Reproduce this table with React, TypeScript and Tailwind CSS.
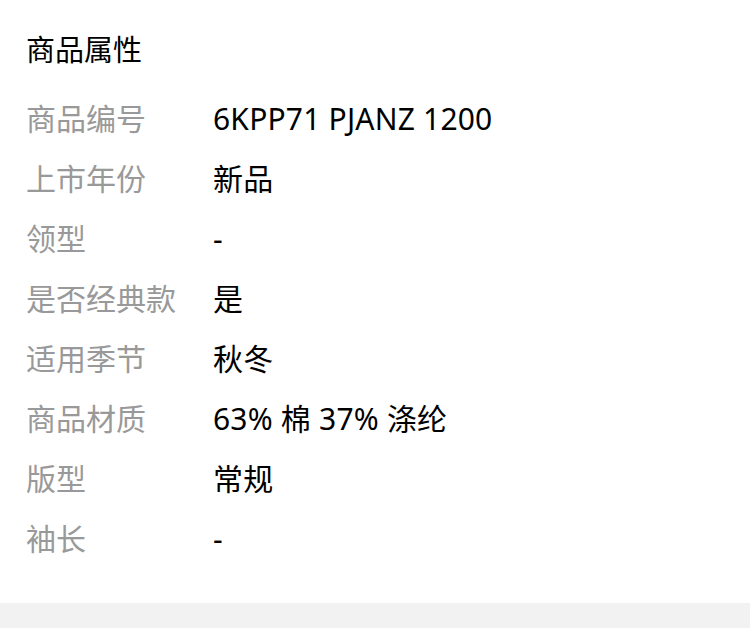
import React from "react";

const rows: [string, string][] = [
  ["商品编号", "6KPP71 PJANZ 1200"],
  ["上市年份", "新品"],
  ["领型", "-"],
  ["是否经典款", "是"],
  ["适用季节", "秋冬"],
  ["商品材质", "63% 棉 37% 涤纶"],
  ["版型", "常规"],
  ["袖长", "-"],
];

export default function App() {
  return (
    <div
      className="w-[750px] h-[628px] bg-[#f2f2f2] flex flex-col"
      style={{ fontFamily: '"Noto Sans", "Noto Sans CJK SC", sans-serif' }}
    >
      <div className="bg-white pl-[26px] pt-[30px] pb-[35px]">
        <div className="h-[40px] leading-[40px] text-[29px] text-black mb-[18px]">商品属性</div>
        {rows.map(([k, v]) => (
          <div key={k} className="flex items-center h-[60px] text-[30px]">
            <div className="w-[187px] shrink-0 text-[#999999]">{k}</div>
            <div className="text-black tracking-[0.2px]">{v}</div>
          </div>
        ))}
      </div>
    </div>
  );
}
